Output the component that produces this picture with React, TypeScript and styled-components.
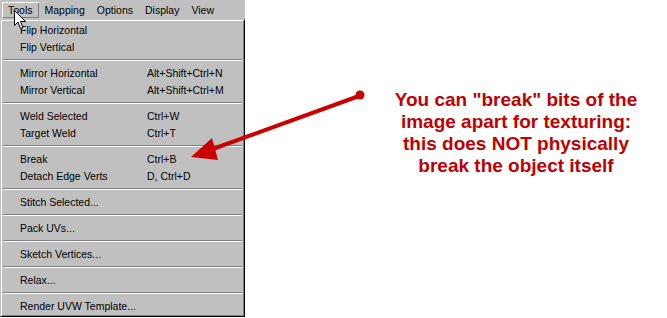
import React, { FC } from "react";
import styled, { createGlobalStyle, css } from "styled-components";

const GlobalStyle = createGlobalStyle`
  html, body {
    margin: 0;
    padding: 0;
    background: #ffffff;
  }
  body {
    font-family: "Liberation Sans", Arial, sans-serif;
  }
`;

interface MenuEntry {
  label: string;
  shortcut?: string;
}

// each inner array is one group, groups are split by a separator
const groups: MenuEntry[][] = [
  [{ label: "Flip Horizontal" }, { label: "Flip Vertical" }],
  [
    { label: "Mirror Horizontal", shortcut: "Alt+Shift+Ctrl+N" },
    { label: "Mirror Vertical", shortcut: "Alt+Shift+Ctrl+M" },
  ],
  [
    { label: "Weld Selected", shortcut: "Ctrl+W" },
    { label: "Target Weld", shortcut: "Ctrl+T" },
  ],
  [
    { label: "Break", shortcut: "Ctrl+B" },
    { label: "Detach Edge Verts", shortcut: "D, Ctrl+D" },
  ],
  [{ label: "Stitch Selected..." }],
  [{ label: "Pack UVs..." }],
  [{ label: "Sketch Vertices..." }],
  [{ label: "Relax..." }],
  [{ label: "Render UVW Template..." }],
];

const menuTitles = ["Tools", "Mapping", "Options", "Display", "View"];

const Cursor: FC = () => (
  <CursorIcon width="13" height="20" viewBox="0 0 13 20">
    <path
      d="M0.5 0.5 L0.5 15.5 L4 12 L6.5 18.5 L9 17.5 L6.5 11.5 L11.5 11.5 Z"
      fill="#ffffff"
      stroke="#000000"
      strokeWidth="1"
      strokeLinejoin="miter"
    />
  </CursorIcon>
);

const Pointer: FC = () => (
  <Overlay width="667" height="318" viewBox="0 0 667 318">
    <line x1="359" y1="96" x2="210" y2="150" stroke="#cc0000" strokeWidth="4" strokeLinecap="round" />
    <circle cx="360" cy="95" r="4.5" fill="#cc0000" />
    <polygon points="191,157 212,138 218,160" fill="#cc0000" />
  </Overlay>
);

const App: FC = () => {
  return (
    <>
      <GlobalStyle />
      <Page>
        <MenuColumn>
          <MenuBar>
            {menuTitles.map((t, i) => (
              <MenuTitle key={t} active={i === 0}>
                {t}
              </MenuTitle>
            ))}
          </MenuBar>
          <Dropdown>
            {groups.map((group, gi) => (
              <React.Fragment key={gi}>
                {gi > 0 && <Separator />}
                {group.map((item) => (
                  <Item key={item.label}>
                    <span>{item.label}</span>
                    <span>{item.shortcut}</span>
                  </Item>
                ))}
              </React.Fragment>
            ))}
          </Dropdown>
        </MenuColumn>
        <Callout>
          You can "break" bits of the
          <br />
          image apart for texturing:
          <br />
          this does NOT physically
          <br />
          break the object itself
        </Callout>
        <Cursor />
        <Pointer />
      </Page>
    </>
  );
};

const Page = styled.div`
  position: relative;
  display: flex;
  width: 667px;
  height: 318px;
  overflow: hidden;
  background: #ffffff;
`;

const MenuColumn = styled.div`
  display: flex;
  flex-direction: column;
  width: 245px;
  height: 317px;
`;

const MenuBar = styled.div`
  display: flex;
  align-items: center;
  height: 19px;
  padding-left: 2px;
  background: #c0c0c0;
  font-size: 10.5px;
  color: #000;
`;

const MenuTitle = styled.div<{ active?: boolean }>`
  height: 16px;
  line-height: 16px;
  padding: 0 6px;
  ${(props) =>
    props.active &&
    css`
      box-shadow: inset 1px 1px #ffffff, inset -1px -1px #808080;
    `}
`;

const Dropdown = styled.div`
  flex: 1;
  display: flex;
  flex-direction: column;
  background: #c0c0c0;
  border: 1px solid #c0c0c0;
  border-right-color: #000;
  border-bottom-color: #000;
  box-shadow: inset 1px 1px #ffffff, inset -1px -1px #808080;
  padding: 1px 2px 1px 19px;
`;

const Item = styled.div`
  display: grid;
  grid-template-columns: 127px 1fr;
  height: 17px;
  align-items: center;
  font-size: 10.5px;
  color: #000;
  white-space: nowrap;
`;

const Separator = styled.div`
  height: 9px;
  margin-left: -17px;
  display: flex;
  align-items: center;

  &::after {
    content: "";
    flex: 1;
    border-top: 1px solid #808080;
    border-bottom: 1px solid #ffffff;
  }
`;

const Callout = styled.div`
  width: 260px;
  margin-left: 141px;
  padding-top: 89px;
  text-align: center;
  font-family: "Liberation Sans", Arial, sans-serif;
  font-weight: bold;
  font-size: 19px;
  line-height: 22px;
  color: #c00000;
  white-space: nowrap;
`;

const CursorIcon = styled.svg`
  position: absolute;
  left: 14px;
  top: 10px;
`;

const Overlay = styled.svg`
  position: absolute;
  left: 0;
  top: 0;
  pointer-events: none;
`;

export default App;
